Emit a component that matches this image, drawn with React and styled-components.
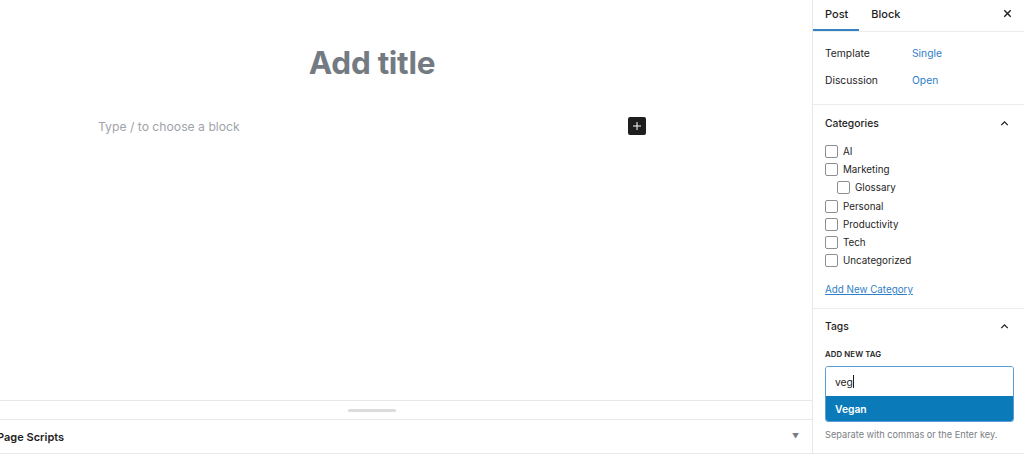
import React from "react";
import styled, { createGlobalStyle } from "styled-components";

const GlobalStyle = createGlobalStyle`
  html, body {
    margin: 0;
    padding: 0;
    background: #ffffff;
  }
  body {
    font-family: Inter, "Noto Sans", "Liberation Sans", sans-serif;
    color: #1e1e1e;
    -webkit-font-smoothing: antialiased;
  }
`;

const categories = [
  { name: "AI", depth: 0 },
  { name: "Marketing", depth: 0 },
  { name: "Glossary", depth: 1 },
  { name: "Personal", depth: 0 },
  { name: "Productivity", depth: 0 },
  { name: "Tech", depth: 0 },
  { name: "Uncategorized", depth: 0 },
];

function ChevronUp() {
  return (
    <svg width="13" height="13" viewBox="0 0 24 24" fill="none">
      <path d="M6 15l6-6 6 6" stroke="#1e1e1e" strokeWidth="2.4" />
    </svg>
  );
}

export default function App() {
  return (
    <Page>
      <GlobalStyle />
      <Editor>
        <Canvas>
          <Column>
            <Title>Add title</Title>
            <BlockRow>
              <Placeholder>Type / to choose a block</Placeholder>
              <Inserter aria-label="Add block">
                <svg width="12" height="12" viewBox="0 0 24 24">
                  <path d="M12 4v16M4 12h16" stroke="#fff" strokeWidth="2" />
                </svg>
              </Inserter>
            </BlockRow>
          </Column>
        </Canvas>
        <ResizeBar>
          <Handle />
        </ResizeBar>
        <MetaBox>
          <MetaTitle>Page Scripts</MetaTitle>
          <Caret>▼</Caret>
        </MetaBox>
      </Editor>

      <Sidebar>
        <Tabs>
          <Tab $active>Post</Tab>
          <Tab>Block</Tab>
          <Close aria-label="Close settings">
            <svg width="11" height="11" viewBox="0 0 24 24">
              <path d="M5 5l14 14M19 5L5 19" stroke="#1e1e1e" strokeWidth="3" />
            </svg>
          </Close>
        </Tabs>

        <Section $pad="14px 12px 17px">
          <InfoRow>
            <InfoLabel>Template</InfoLabel>
            <InfoLink>Single</InfoLink>
          </InfoRow>
          <InfoRow>
            <InfoLabel>Discussion</InfoLabel>
            <InfoLink>Open</InfoLink>
          </InfoRow>
        </Section>

        <Section $pad="11px 13px 13px 12px">
          <SectionHead>
            <SectionTitle>Categories</SectionTitle>
            <ChevronUp />
          </SectionHead>
          <CheckList>
            {categories.map((c) => (
              <CheckItem key={c.name} $depth={c.depth}>
                <Box />
                <span>{c.name}</span>
              </CheckItem>
            ))}
          </CheckList>
          <AddLink>Add New Category</AddLink>
        </Section>

        <Section $pad="10px 10px 11px 12px">
          <SectionHead $chevronPad="3px">
            <SectionTitle>Tags</SectionTitle>
            <ChevronUp />
          </SectionHead>
          <FieldLabel>Add New Tag</FieldLabel>
          <Combo>
            <ComboInput>
              veg<CaretLine />
            </ComboInput>
            <Suggestion>Vegan</Suggestion>
          </Combo>
          <Help>Separate with commas or the Enter key.</Help>
        </Section>
      </Sidebar>
    </Page>
  );
}

const Page = styled.div`
  display: flex;
  width: 1024px;
  height: 466px;
  overflow: hidden;
  align-items: flex-start;
`;

const Editor = styled.main`
  flex: none;
  width: 880px;
  margin-left: -68px;
  display: flex;
  flex-direction: column;
`;

const Canvas = styled.div`
  height: 400px;
  display: flex;
  justify-content: center;
`;

const Column = styled.div`
  width: 548px;
  padding-top: 44px;
  display: flex;
  flex-direction: column;
`;

const Title = styled.h1`
  margin: 0;
  text-align: center;
  font-size: 31.5px;
  line-height: 38px;
  font-weight: 700;
  letter-spacing: -0.3px;
  color: #747a82;
`;

const BlockRow = styled.div`
  margin-top: 35px;
  display: flex;
  align-items: center;
  justify-content: space-between;
`;

const Placeholder = styled.p`
  margin: 0;
  font-size: 12.2px;
  color: #a0a4a9;
`;

const Inserter = styled.button`
  width: 18px;
  height: 18px;
  padding: 0;
  border: none;
  border-radius: 2px;
  background: #1e1e1e;
  display: flex;
  align-items: center;
  justify-content: center;
`;

const ResizeBar = styled.div`
  height: 19px;
  border-top: 1px solid #e8e8e8;
  display: flex;
  justify-content: center;
  align-items: flex-start;
  padding-top: 8px;
  box-sizing: border-box;
`;

const Handle = styled.div`
  width: 48px;
  height: 3px;
  border-radius: 2px;
  background: #dcdcdc;
`;

const MetaBox = styled.div`
  height: 33px;
  border-top: 1px solid #e8e8e8;
  border-bottom: 1px solid #e8e8e8;
  display: flex;
  align-items: center;
  justify-content: space-between;
  padding: 0 13px 0 65px;
`;

const MetaTitle = styled.h2`
  margin: 0;
  font-size: 11px;
  font-weight: 600;
  color: #1e1e1e;
`;

const Caret = styled.span`
  font-size: 7px;
  color: #787c82;
`;

const Sidebar = styled.aside`
  flex: none;
  width: 211px;
  height: 453px;
  border-left: 1px solid #e8e8e8;
  border-bottom: 1px solid #e8e8e8;
  display: flex;
  flex-direction: column;
`;

const Tabs = styled.div`
  height: 32px;
  box-sizing: border-box;
  border-bottom: 1px solid #ececec;
  display: flex;
  align-items: stretch;
  flex: none;
`;

const Tab = styled.div`
  padding: 0 11px 4px 12px;
  display: flex;
  align-items: center;
  font-size: 11px;
  font-weight: 500;
  color: #1e1e1e;
  box-shadow: ${(p) => (p.$active ? "inset 0 -2px 0 #3582c4" : "none")};
`;

const Close = styled.button`
  margin-left: auto;
  margin-right: 11px;
  padding: 0 0 4px;
  border: none;
  background: none;
  display: flex;
  align-items: center;
`;

const Section = styled.section`
  padding: ${(p) => p.$pad};
  border-bottom: 1px solid #ececec;
  flex: none;
  &:last-child {
    border-bottom: none;
  }
`;

const InfoRow = styled.div`
  display: flex;
  align-items: center;
  height: 14px;
  font-size: 10.3px;
  & + & {
    margin-top: 13px;
  }
`;

const InfoLabel = styled.span`
  width: 87px;
  color: #1e1e1e;
`;

const InfoLink = styled.span`
  color: #2f80c8;
`;

const SectionHead = styled.div`
  display: flex;
  align-items: center;
  justify-content: space-between;
  height: 14px;
  padding-right: ${(p) => p.$chevronPad || "0"};
`;

const SectionTitle = styled.h3`
  margin: 0;
  font-size: 10.3px;
  font-weight: 500;
  color: #1e1e1e;
`;

const CheckList = styled.ul`
  list-style: none;
  margin: 15px 0 0;
  padding: 0;
  display: flex;
  flex-direction: column;
  gap: 5.2px;
`;

const CheckItem = styled.li`
  display: flex;
  align-items: center;
  gap: 5px;
  height: 13px;
  padding-left: ${(p) => p.$depth * 12}px;
  font-size: 9.8px;
  color: #1e1e1e;
`;

const Box = styled.span`
  width: 11px;
  height: 11px;
  border: 1px solid #8c8f94;
  border-radius: 2px;
  background: #fff;
  flex: none;
`;

const AddLink = styled.a`
  display: block;
  margin-top: 17px;
  font-size: 9.8px;
  color: #2f80c8;
  text-decoration: underline;
  text-underline-offset: 1px;
`;

const FieldLabel = styled.div`
  margin-top: 16px;
  font-size: 7.8px;
  font-weight: 600;
  text-transform: uppercase;
  color: #1e1e1e;
  letter-spacing: 0.1px;
`;

const Combo = styled.div`
  margin-top: 7px;
  border: 1px solid #5b9dd9;
  border-radius: 3px;
  overflow: hidden;
`;

const ComboInput = styled.div`
  height: 29px;
  display: flex;
  align-items: center;
  padding-left: 9px;
  font-size: 10.3px;
  color: #1e1e1e;
  background: #fff;
`;

const CaretLine = styled.span`
  display: inline-block;
  width: 1px;
  height: 13px;
  background: #1e1e1e;
`;

const Suggestion = styled.div`
  height: 25px;
  display: flex;
  align-items: center;
  padding-left: 9px;
  background: #0a7ab8;
  color: #fff;
  font-size: 10.3px;
  font-weight: 600;
`;

const Help = styled.p`
  margin: 7px 0 0;
  font-size: 9.2px;
  color: #7a7e84;
`;
